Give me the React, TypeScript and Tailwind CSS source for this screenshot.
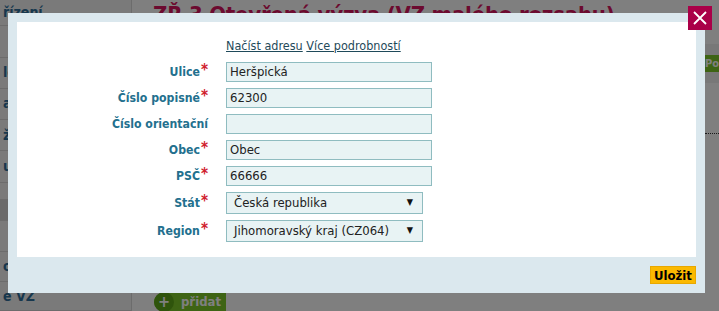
const sideItems = [
  { h: 27, text: 'řízení' },
  { h: 33, text: '' },
  { h: 32, text: 'lo' },
  { h: 33, text: 'ar' },
  { h: 32, text: 'žb' },
  { h: 33, text: 'u' },
  { h: 18, text: '' },
  { h: 21, text: '', active: true },
  { h: 33, text: '' },
  { h: 31, text: 'oc' },
  { h: 30, text: 'e VZ' },
]

const fields = [
  { label: 'Ulice', req: true, value: 'Heršpická', type: 'input' },
  { label: 'Číslo popisné', req: true, value: '62300', type: 'input' },
  { label: 'Číslo orientační', req: false, value: '', type: 'input' },
  { label: 'Obec', req: true, value: 'Obec', type: 'input' },
  { label: 'PSČ', req: true, value: '66666', type: 'input' },
  { label: 'Stát', req: true, value: 'Česká republika', type: 'select' },
  { label: 'Region', req: true, value: 'Jihomoravský kraj (CZ064)', type: 'select' },
]

function Field({ f }: { f: (typeof fields)[number] }) {
  const isSelect = f.type === 'select'
  return (
    <div className={`flex items-center ${isSelect ? 'h-[22px]' : 'h-[20px]'}`}>
      <div className="w-[193px] flex justify-end items-start pr-[2px] text-[12.2px] font-bold text-[#23708e] leading-none">
        <span>{f.label}</span>
        {f.req && <span className="text-[#d0202c] text-[15px] leading-none -mt-[3px] ml-[1px]">*</span>}
      </div>
      <div className="ml-[16px]">
        {isSelect ? (
          <div className="w-[197px] h-[22px] bg-[#e8f3f4] border border-[#8fbcc0] flex items-center justify-between pl-[7px] pr-[9px] text-[13px] text-[#222]">
            <span>{f.value}</span>
            <span className="text-[9px] text-[#111]">▼</span>
          </div>
        ) : (
          <div className="w-[206px] h-[20px] bg-[#e8f3f4] border border-[#8fbcc0] flex items-center pl-[3px] text-[13px] text-[#222]">
            {f.value}
          </div>
        )}
      </div>
    </div>
  )
}

export default function App() {
  return (
    <div className="relative w-[719px] h-[311px] overflow-hidden bg-white" style={{ fontFamily: '"DejaVu Sans Condensed", "DejaVu Sans", Tahoma, sans-serif' }}>
      {/* page behind the dialog */}
      <div className="flex h-full">
        <div className="w-[132px] flex-shrink-0 bg-[#f4f4f4] border-r border-[#d8d8d8] flex flex-col">
          {sideItems.map((it, i) => (
            <div key={i}
              className={`flex items-center px-[3px] text-[14px] font-bold text-[#2f6e9a] whitespace-nowrap border-b border-[#d8d8d8] ${it.active ? 'bg-[#d4d4d4]' : ''}`}
              style={{ height: it.h }}>
              {it.text}
            </div>
          ))}
        </div>
        <div className="flex-1 flex flex-col">
          <h1 className="pl-[21px] text-[22px] font-bold text-[#d8145e] whitespace-nowrap leading-[30px] tracking-[-0.2px]">ZŘ 3 Otevřená výzva (VZ malého rozsahu)</h1>
          <div className="mt-[14px] h-[39px] bg-[#f0f0f0] flex items-center justify-end">
            <div className="h-[17px] w-[14px] bg-[#7cc828] text-[11px] font-bold text-white leading-[17px] overflow-hidden">Po</div>
          </div>
          <div className="mt-[50px] ml-[573px] w-[14px] border-t border-dotted border-[#333]" />
          <div className="flex-1" />
          <div className="ml-[22px] flex items-center h-[18px] w-[72px] bg-[#7cc828] rounded-l-full">
            <span className="w-[20px] h-[20px] rounded-full bg-[#5fa818] flex items-center justify-center text-white text-[16px] font-bold leading-none">+</span>
            <span className="ml-[7px] text-[13px] font-bold text-white">přidat</span>
          </div>
        </div>
      </div>

      {/* overlay */}
      <div className="absolute inset-0 bg-black/50" />

      {/* dialog */}
      <div className="absolute left-[8px] top-[13px] w-[697px] h-[280px] bg-[#dbe8ee] p-[9px] flex flex-col">
        <div className="bg-white h-[236px] pt-[16px]">
          <div className="pl-[209px] text-[12.5px] text-[#1f4a5a] leading-[16px]">
            <span className="underline">Načíst adresu</span>{' '}
            <span className="underline">Více podrobností</span>
          </div>
          <div className="mt-[8px] flex flex-col gap-[6px]">
            {fields.map((f, i) => (
              <Field key={i} f={f} />
            ))}
          </div>
        </div>
        <div className="flex justify-end mt-[9px]">
          <button className="w-[46px] h-[18px] bg-[#fbb900] border border-[#e8a800] text-[13px] font-bold text-black leading-none">Uložit</button>
        </div>
      </div>

      {/* close */}
      <button className="absolute left-[688px] top-[6px] w-[24px] h-[24px] bg-[#aa0048] flex items-center justify-center">
        <svg width="14" height="14" viewBox="0 0 14 14"><path d="M1 1 L13 13 M13 1 L1 13" stroke="white" strokeWidth="1.8" /></svg>
      </button>
    </div>
  )
}
